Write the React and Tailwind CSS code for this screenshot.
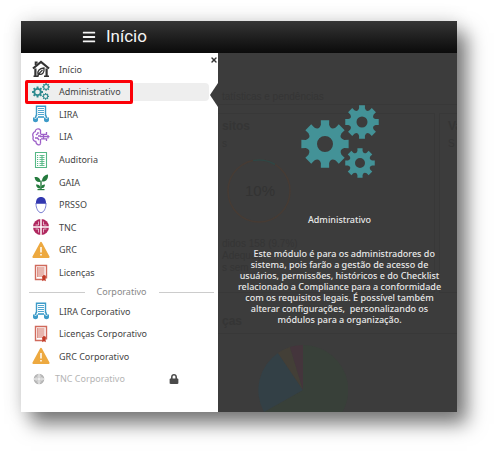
import React from 'react';
import { FaBars, FaLock } from 'react-icons/fa';
import { XIcon } from 'lucide-react';

// Outline of an eight-toothed gear with a round hole
const gearPath = (cx, cy, r, hole) => {
  const pt = (deg, rad) => {
    const a = (deg * Math.PI) / 180;
    return `${(cx + rad * Math.cos(a)).toFixed(2)} ${(cy + rad * Math.sin(a)).toFixed(2)}`;
  };
  let d = '';
  for (let i = 0; i < 8; i++) {
    const a = i * 45;
    d += `${i === 0 ? 'M' : 'L'}${pt(a - 10, r)} L${pt(a + 10, r)} L${pt(a + 12, r * 0.82)} `;
    d += `Q${pt(a + 22.5, r * 0.62)} ${pt(a + 33, r * 0.82)} `;
  }
  d += `Z M${cx + hole} ${cy} A${hole} ${hole} 0 1 0 ${cx - hole} ${cy} A${hole} ${hole} 0 1 0 ${cx + hole} ${cy} Z`;
  return d;
};

const GearsIcon = ({ className, holes = [8, 5.5, 5] }) => (
  <svg viewBox="0 0 78 74" className={className} fill="currentColor" fillRule="evenodd" aria-hidden="true">
    <path d={gearPath(24, 39, 24, holes[0])} />
    <path d={gearPath(61, 17, 17, holes[1])} />
    <path d={gearPath(59, 58, 15, holes[2])} />
  </svg>
);

const HomeIcon = () => (
  <svg viewBox="0 0 18 18" className="size-[18px] text-[#333]" fill="none" stroke="currentColor" aria-hidden="true">
    <path d="M1 8.5 9 2l8 6.5" strokeWidth="2.2" />
    <path d="M3.6 5V2.5h2" strokeWidth="1.8" />
    <path d="M3.4 8.5V16M14.6 8.5V16" strokeWidth="2.2" />
    <path d="M1.5 16.2h5M12 16.2h5" strokeWidth="1.6" />
    <path d="M6 14.5c-.8-4 1.5-6 6-6.5.5 4.5-1.5 7-5 6.3M5.5 16.5c1-2.5 2.5-4.5 5-6.5" strokeWidth="1.3" />
  </svg>
);

const LiraIcon = () => (
  <svg viewBox="0 0 18 18" className="size-[18px] text-[#3d9bc8]" fill="none" stroke="currentColor" aria-hidden="true">
    <path d="M4.5 11V1.2h9V11" strokeWidth="1.4" />
    <path d="M6 3.5h6M6 5.5h6M6 7.5h6M6 9.5h6" strokeWidth="0.9" />
    <path d="M6 12h6" strokeWidth="1.6" />
    <path d="M4.5 10 3.2 13M13.5 10l1.3 3" strokeWidth="1.5" />
    <path d="M1 12.5h1.6v1.300h1.800v-1.300H6v2.700C6 17.800 1 17.800 1 15.200zM12 12.500h1.600v1.300h1.800v-1.300H17v2.700c0 2.600-5 2.600-5 0z" fill="currentColor" stroke="none" />
  </svg>
);

const LiaIcon = () => (
  <svg viewBox="0 0 18 18" className="size-[18px] text-[#9d5fc8]" fill="none" stroke="currentColor" strokeWidth="1.3" aria-hidden="true">
    <path d="M8.5 2C6.5-.2 3.2 1 3.2 3.6.8 4.2.2 7 1.3 9c-1 2.3.6 4.4 2.5 4.4.2 3.4 3.4 4.6 4.7 2.3" />
    <path d="M8.5 2v4.500M8.500 11v4.700M6 4v1.500L4 7M3 10h2.500L7 12M6 8h3" />
    <path d="M9 6.500h5.500V4M8 8.700h9.500M9 10.900h5.500V13M11.500 6.500v4.500M16 7v3.500" />
  </svg>
);

const AuditoriaIcon = () => (
  <svg viewBox="0 0 18 18" className="size-[18px] text-[#55b885]" fill="none" stroke="currentColor" aria-hidden="true">
    <path d="M3.5 1.5h11v15h-11z" strokeWidth="1.1" />
    <path d="M7.5 4.5h5M7.5 6.5h5M7.5 8.5h5M7.5 10.5h5M7.5 12.5h5M7.5 14.5h5" strokeWidth="0.9" />
    <path d="M5 4.5h1.2M5 6.5h1.2M5 8.5h1.2M5 10.5h1.2M5 12.5h1.2M5 14.5h1.2" strokeWidth="1.1" />
    <path d="M10 4v10.5" strokeWidth="1" />
  </svg>
);

const GaiaIcon = () => (
  <svg viewBox="0 0 18 18" className="size-[18px] text-[#247a3d]" fill="currentColor" aria-hidden="true">
    <path d="M2.5 4C6 3.5 8.5 5.5 8.5 9 5 9.5 3 8 2.5 4Z" />
    <path d="M16 1.5c.5 4.5-2 7.5-6 7 0-4 2-6.5 6-7Z" />
    <path d="M8.3 7.5h1.4V16H8.300z" />
    <path d="M8.7 15.5C8.5 12.5 6.5 11 4 11.5c.3 3 2 4.3 4.7 4ZM9 15c0-2.500 1.500-3.500 4-3.500-.2 2.800-1.500 4-4 3.500Z" />
    <path d="M5.5 16h7v1.200h-7z" />
  </svg>
);

const HelmetIcon = () => (
  <svg viewBox="0 0 18 18" className="size-[18px] text-[#3238b0]" aria-hidden="true">
    <path d="M4 7C4 3 6 1 9 1s5 2 5 6l1 .8H3z" fill="currentColor" />
    <path d="M4 8C4 12 6.2 16.7 9 16.7S14 12 14 8" fill="none" stroke="#7b80d2" strokeWidth="1" />
  </svg>
);

const TncIcon = ({ className }) => (
  <svg viewBox="0 0 18 18" className={className} aria-hidden="true">
    <circle cx="9" cy="9" r="8" fill="currentColor" />
    <path d="M9 1v16M1 9h16" stroke="white" strokeWidth="1.5" />
    <path d="M6.5 3.5v3.5h-3M11.5 3.5v3.5h3M6.5 14.5V11h-3M11.5 14.5V11h3" fill="none" stroke="white" strokeWidth="0.8" opacity="0.8" />
  </svg>
);

const WarningIcon = () => (
  <svg viewBox="0 0 18 18" className="size-[18px]" aria-hidden="true">
    <path d="M9 1.8 16.7 16H1.3Z" fill="#eda940" stroke="#eda940" strokeWidth="1.8" strokeLinejoin="round" />
    <path d="M9 6v5.5M9 13v1.6" stroke="white" strokeWidth="1.5" />
  </svg>
);

const LicenseIcon = () => (
  <svg viewBox="0 0 18 18" className="size-[18px] text-[#d06a5c]" fill="none" stroke="currentColor" aria-hidden="true">
    <path d="M11 15.5H3.5v-14h11v13" strokeWidth="1.4" />
    <path d="M6 4h6.5M6 6h6.5M6 8h6.5M6 10h6.5M6 12h4" strokeWidth="1" />
    <path d="M5.5 3v10" strokeWidth="0.7" />
    <circle cx="12" cy="13" r="2" fill="#c23a28" stroke="none" />
    <path d="m10.5 14-.3 3.3 1.8-1 1.8 1-.3-3.3z" fill="#c23a28" stroke="none" />
  </svg>
);

const modules = [
  { name: 'Início', icon: <HomeIcon /> },
  {
    name: 'Administrativo',
    icon: <GearsIcon className="w-[18px] text-[#2f8a8f]" holes={[10, 8, 7]} />,
    active: true,
  },
  { name: 'LIRA', icon: <LiraIcon /> },
  { name: 'LIA', icon: <LiaIcon /> },
  { name: 'Auditoria', icon: <AuditoriaIcon /> },
  { name: 'GAIA', icon: <GaiaIcon /> },
  { name: 'PRSSO', icon: <HelmetIcon /> },
  { name: 'TNC', icon: <TncIcon className="size-[18px] text-[#b0285f]" /> },
  { name: 'GRC', icon: <WarningIcon /> },
  { name: 'Licenças', icon: <LicenseIcon /> },
];

const corporateModules = [
  { name: 'LIRA Corporativo', icon: <LiraIcon /> },
  { name: 'Licenças Corporativo', icon: <LicenseIcon /> },
  { name: 'GRC Corporativo', icon: <WarningIcon /> },
];

const ModuleLink = ({ item }) => (
  <li className="flex">
    <a href="#" className="relative mr-2 flex flex-1 items-center pl-[11px]">
      {item.active && <span className="absolute inset-y-[2px] right-px left-1 rounded-sm bg-[#eeeeee]" />}
      {item.active && <span className="absolute -inset-y-px left-1 w-[108px] rounded-xs border-3 border-[#fb0007]" />}
      <span className="relative flex w-[27px]">{item.icon}</span>
      <span className="relative">{item.name}</span>
    </a>
  </li>
);

const Sidebar = () => (
  <nav className="relative w-[197px] shrink-0 bg-white pt-[5px] pb-[22px] text-[9px] text-[#444]">
    <button aria-label="Fechar" className="absolute top-[3px] right-0 text-[#333]">
      <XIcon size={8} strokeWidth={4} />
    </button>
    <ul className="grid h-[226px] auto-rows-fr">
      {modules.map((item) => (
        <ModuleLink key={item.name} item={item} />
      ))}
    </ul>
    <div className="flex h-4 items-center gap-3 pr-1 pl-2 text-[#888]">
      <span className="h-px flex-1 bg-[#ccc]" />
      Corporativo
      <span className="h-px flex-1 bg-[#ccc]" />
    </div>
    <ul className="grid h-[90px] auto-rows-fr">
      {corporateModules.map((item) => (
        <ModuleLink key={item.name} item={item} />
      ))}
      <li className="flex items-center pl-3 text-[#b4b4b4]">
        <span className="w-[22px]">
          <TncIcon className="size-3" />
        </span>
        TNC Corporativo
        <FaLock size={10} className="mr-[39px] ml-auto text-[#4a4a4a]" />
      </li>
    </ul>
    <span className="absolute top-[30px] right-0 h-6 w-2 bg-[#3c3c3c] [clip-path:polygon(100%_0,0_50%,100%_100%)]" />
  </nav>
);

// Dimmed dashboard that stays visible behind the module description
const Dashboard = () => (
  <div className="flex h-full flex-col font-['Liberation_Sans',sans-serif] text-[10px] leading-3 text-[#353535]" aria-hidden="true">
    <p className="h-[52px] border-b border-[#383838] pt-[38px] pl-1">tatísticas e pendências</p>
    <div className="mt-2 flex h-[180px] gap-1">
      <div className="flex-1 border border-l-0 border-[#383838] pt-1 pl-1">
        <p className="text-xs font-bold">sitos</p>
        <p className="mt-1">s</p>
        <svg viewBox="0 0 66 66" className="mt-2 ml-1 size-[66px]">
          <circle cx="33" cy="33" r="31" fill="none" stroke="#463b34" strokeWidth="1.5" />
          <path d="M27 2.6A31 31 0 0 1 49 6.5" fill="none" stroke="#2f4645" strokeWidth="1.5" />
          <text x="34" y="38" textAnchor="middle" fontSize="15" fill="#333">10%</text>
        </svg>
        <div className="mt-[14px]">
          <p>didos 158 (9.7%)</p>
          <p>Adequaç</p>
          <p>s sem</p>
        </div>
      </div>
      <div className="w-[18px] overflow-hidden border border-r-0 border-[#383838] pt-1 pl-2">
        <p className="text-xs font-bold">Va</p>
        <p className="mt-1">S</p>
      </div>
    </div>
    <p className="mt-5 border-b border-[#383838] pb-1 pl-1 text-xs font-bold">ças</p>
    <svg viewBox="-45 -45 90 67" className="mt-auto ml-10 w-[90px] shrink-0">
      <path d="M0 0V-45A45 45 0 1 1-39 22Z" fill="#384039" />
      <path d="M0 0-39 22A45 45 0 0 1-25-37Z" fill="#334046" />
      <path d="M0 0-25-37A45 45 0 0 1-13-43Z" fill="#433f37" />
      <path d="M0 0-13-43A45 45 0 0 1 0-45Z" fill="#44353c" />
    </svg>
  </div>
);

const ModuleDescription = () => (
  <section className="relative min-w-0 flex-1 overflow-hidden bg-[#3c3c3c]">
    <Dashboard />
    <div className="absolute inset-0 flex flex-col items-center pt-[52px] pr-3 pl-4 text-center text-[9px] font-medium text-[#e8e8e8]">
      <GearsIcon className="w-[78px] text-[#439297]" />
      <h2 className="mt-[33px] leading-4">Administrativo</h2>
      <p className="mt-5 leading-[11px] whitespace-pre-line">
        {`\u00a0\u00a0\u00a0 Este módulo é para os administradores do
        sistema, pois farão a gestão de acesso de
        usuários, permissões, históricos e do Checklist
        relacionado a Compliance para a conformidade
        com os requisitos legais. É possível também
        alterar configurações,\u00a0 personalizando os
        módulos para a organização.`}
      </p>
    </div>
  </section>
);

export default function App() {
  return (
    <div className="min-h-screen overflow-hidden bg-white pt-[21px] pr-[42px] pb-[42px] pl-[21px] font-['Noto_Sans',sans-serif]">
      <div className="shadow-[0_0_18px_rgba(0,0,0,0.14),10px_12px_18px_rgba(0,0,0,0.5)]">
        <header className="flex h-8 items-center gap-2.5 bg-linear-to-b from-[#363636] to-[#0b0b0b] pl-[61px] text-[#f4f4f4]">
          <button aria-label="Menu">
            <FaBars size={14} />
          </button>
          <h1 className="font-['Roboto',sans-serif] text-[17px]">Início</h1>
        </header>
        <div className="flex">
          <Sidebar />
          <ModuleDescription />
        </div>
      </div>
    </div>
  );
}
